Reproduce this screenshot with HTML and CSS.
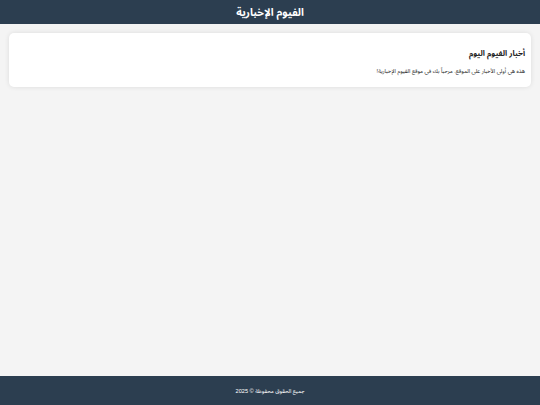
FILE: index.html
```html
<!DOCTYPE html>
<html lang="ar" dir="rtl">
<head>
<meta charset="utf-8">
<title>الفيوم الإخبارية</title>
<link rel="stylesheet" href="styles.css">
</head>
<body>
<header class="site-header">
  <h1 class="site-title">الفيوم الإخبارية</h1>
</header>
<main class="content">
  <article class="card">
    <h2 class="card-title">أخبار الفيوم اليوم</h2>
    <p class="card-text">هذه هي أولى الأخبار على الموقع. مرحباً بك في موقع الفيوم الإخبارية!</p>
  </article>
</main>
<footer class="site-footer">
  <p class="footer-text">جميع الحقوق محفوظة © 2025</p>
</footer>
</body>
</html>
```
FILE: styles.css
```css
html, body {
  margin: 0;
  padding: 0;
  height: 100%;
}
body {
  font-family: "Liberation Sans", "Noto Sans Arabic", sans-serif;
  background: #f4f4f4;
  color: #222;
  display: flex;
  flex-direction: column;
}
.site-header {
  background: #2c3e50;
  color: #fff;
  height: 24px;
  display: flex;
  align-items: center;
  justify-content: center;
}
.site-title {
  margin: 0;
  font-size: 10.6px;
  font-weight: bold;
}
.content {
  flex: 1;
  padding: 9px 9px;
}
.card {
  background: #fff;
  border-radius: 5px;
  box-shadow: 0 0 5px rgba(0,0,0,0.1);
  padding: 12px 6px 12px 6px;
  height: 30px;
}
.card-title {
  margin: 0 0 3px 0;
  font-size: 7.8px;
  font-weight: bold;
  color: #222;
}
.card-text {
  margin: 0;
  font-size: 5.6px;
  color: #222;
}
.site-footer {
  background: #2c3e50;
  color: #fff;
  height: 29px;
  display: flex;
  align-items: center;
  justify-content: center;
}
.footer-text {
  margin: 0;
  font-size: 5.6px;
}
```
